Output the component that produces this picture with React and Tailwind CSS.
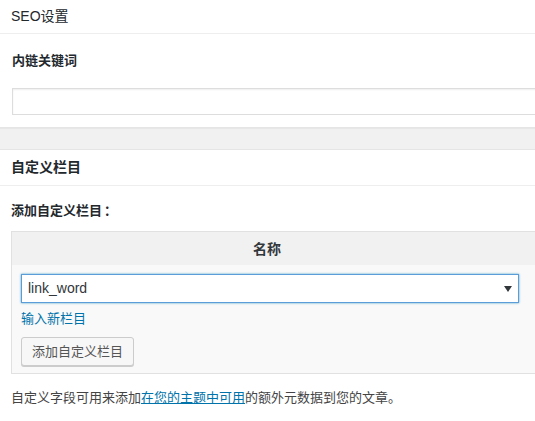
export default function App() {
  const font = { fontFamily: '"Liberation Sans", "Noto Sans CJK SC", sans-serif' };
  return (
    <div className="w-full overflow-hidden bg-[#f1f1f1] h-[421px]" style={font}>
      <div className="w-[560px]">
        {/* Panel 1 */}
        <div className="bg-white border-b border-[#e5e5e5] shadow-[0_1px_1px_rgba(0,0,0,0.04)]">
          <div className="h-[34px] flex items-center px-[11px] border-b border-[#eeeeee] text-[14px] text-[#23282d]">
            SEO设置
          </div>
          <div className="pl-3 pt-[17px] pb-3">
            <div className="text-[13px] leading-[20px] font-semibold text-[#23282d]">内链关键词</div>
            <div className="mt-[17px] h-[27px] w-[540px] border border-[#dddddd] bg-white shadow-[inset_0_1px_2px_rgba(0,0,0,0.07)]"></div>
          </div>
        </div>
        <div className="h-[21px]"></div>
        {/* Panel 2 */}
        <div className="bg-white border-t border-[#e5e5e5] h-[272px]">
          <div className="h-[36px] flex items-center px-[11px] border-b border-[#eeeeee] text-[14px] font-semibold text-[#23282d]">
            自定义栏目
          </div>
          <div className="pl-[11px] pt-[14px]">
            <div className="text-[13px] leading-[20px] font-semibold text-[#23282d]">
              添加自定义栏目<span className="ml-[2px]" style={{ fontFamily: '"Noto Sans CJK SC", sans-serif' }}>：</span>
            </div>
            <div className="mt-[10px] w-[540px] border border-[#e1e1e1] bg-[#f9f9f9]">
              <div className="h-[33px] bg-[#f1f1f1] flex items-center">
                <div className="w-[510px] pt-[1px] text-center text-[14px] font-semibold text-[#32373c]">名称</div>
              </div>
              <div className="pl-[9px] pt-[9px] pb-[7px]">
                <div className="w-[498px] h-[29px] border border-[#5b9dd9] bg-white shadow-[0_0_2px_rgba(30,140,190,0.8)] flex items-center justify-between pl-[6px] pr-[6px] text-[14px] text-[#32373c]">
                  <span>link_word</span>
                  <svg width="8" height="6" viewBox="0 0 8 6" className="mt-[1px]">
                    <path d="M0 0 L8 0 L4 6 Z" fill="#32373c" />
                  </svg>
                </div>
                <div className="mt-[6px] text-[13px] leading-[20px] text-[#0073aa]">输入新栏目</div>
                <div className="mt-[8px] inline-flex items-center h-[29px] px-[10px] border border-[#cccccc] rounded-[3px] bg-[#f7f7f7] shadow-[0_1px_0_#cccccc] text-[13px] text-[#555555]">
                  添加自定义栏目
                </div>
              </div>
            </div>
            <div className="mt-[14px] text-[13px] leading-[20px] text-[#444444]">
              自定义字段可用来添加<span className="text-[#0073aa] underline">在您的主题中可用</span>的额外元数据到您的文章。
            </div>
          </div>
        </div>
      </div>
    </div>
  );
}
